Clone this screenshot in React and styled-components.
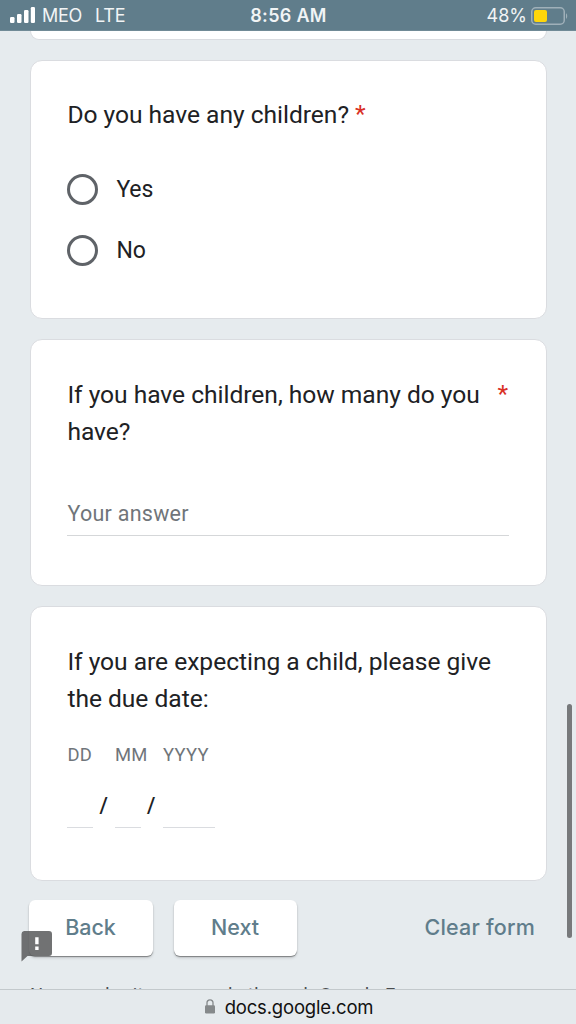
import React from 'react'
import styled, { createGlobalStyle } from 'styled-components'

const GlobalStyle = createGlobalStyle`
  * {
    box-sizing: border-box;
  }

  body {
    margin: 0;
    background-color: #e6ebee;
    font-family: Roboto, "Liberation Sans", sans-serif;
    color: #202124;
  }
`

const Screen = styled.div`
  position: relative;
  width: 576px;
  height: 1024px;
  display: flex;
  flex-direction: column;
  overflow: hidden;
  background-color: #e6ebee;
`

const StatusBar = styled.header`
  flex: none;
  height: 31px;
  padding: 1px 8px 0 10px;
  display: grid;
  grid-template-columns: 1fr auto 1fr;
  align-items: center;
  background-color: #607d8b;
  border-bottom: 1px solid #708a96;
  color: #f1f4f5;
  font-family: Inter, sans-serif;
  font-size: 18px;
`

const Carrier = styled.div`
  display: flex;
  align-items: center;
  gap: 7px;
  letter-spacing: -0.25px;
`

const Network = styled.span`
  margin-left: 6px;
`

const Clock = styled.div`
  padding-right: 1px;
  font-weight: 600;
  letter-spacing: 0.3px;
`

const Power = styled.div`
  display: flex;
  align-items: center;
  justify-content: flex-end;
  gap: 4px;
`

const Page = styled.main`
  flex: 1;
  min-height: 0;
  padding: 0 29px 0 30px;
  display: flex;
  flex-direction: column;
  overflow: hidden;
`

const Card = styled.section`
  flex: none;
  height: ${({ $height }) => $height}px;
  margin-bottom: 20px;
  padding: 36px 38px 0 36.4px;
  background-color: #fff;
  border: 1px solid #dadce0;
  border-radius: 12px;
`

const PreviousCard = styled(Card)`
  height: 9px;
  padding: 0;
  border-top: 0;
  border-radius: 0 0 12px 12px;
`

const ChoiceCard = styled(Card)`
  padding-top: 35px;
`

const Question = styled.div`
  display: flex;
  gap: ${({ $gap }) => $gap || 0}px;
  font-size: 24.6px;
  line-height: 37px;
  letter-spacing: -0.03px;
`

const Required = styled.span`
  color: #d93025;
  line-height: 35px;
`

const Options = styled.div`
  margin-top: 41px;
  display: flex;
  flex-direction: column;
  gap: 30.4px;
`

const Option = styled.label`
  height: 31px;
  display: flex;
  align-items: center;
  gap: 18px;
  font-size: 23px;
  letter-spacing: -0.1px;
`

const Radio = styled.span`
  width: 31px;
  height: 31px;
  border: 3px solid #5f6368;
  border-radius: 50%;
`

const Answer = styled.div`
  width: 442px;
  height: 41px;
  margin-top: 45px;
  border-bottom: 1px solid #d5d7d9;
  color: #70757a;
  font-size: 21.5px;
  line-height: 37px;
  letter-spacing: 0.27px;
`

const DateFields = styled.div`
  margin-top: 26px;
  display: flex;
`

const DateField = styled.div`
  width: ${({ $width }) => $width}px;
`

const DateLabel = styled.div`
  height: 24px;
  color: #70757a;
  font-size: 18.4px;
  line-height: 24px;
  letter-spacing: 0.35px;
  white-space: nowrap;
`

const DateBlank = styled.div`
  height: 36px;
  margin-top: 25px;
  border-bottom: 1px solid #dadce0;
`

const Slash = styled.span`
  width: ${({ $width }) => $width}px;
  padding: 49px 0 0 6px;
  font-size: 21.5px;
  font-weight: 500;
  line-height: 28px;
`

const Actions = styled.div`
  flex: none;
  height: 56px;
  margin: -1px 12px 0 -1px;
  display: flex;
  align-items: center;
  gap: 21px;
`

const Button = styled.button`
  width: ${({ $width }) => $width}px;
  height: 56px;
  padding: 0 1px 3px 0;
  border: 0;
  border-radius: 6px;
  background-color: #fff;
  box-shadow: 0 1px 1px rgba(0, 0, 0, 0.38), 0 2px 3px rgba(0, 0, 0, 0.14);
  color: #607d8b;
  font-family: Inter, sans-serif;
  font-size: 21.5px;
  font-weight: 500;
  letter-spacing: -0.05px;
`

const ClearButton = styled(Button)`
  width: auto;
  margin-left: auto;
  padding-right: 0;
  background: none;
  box-shadow: none;
  letter-spacing: 0.2px;
`

const Notice = styled.p`
  flex: none;
  margin: 25px 0 0;
  color: #4a4d50;
  font-size: 18.4px;
  line-height: 28px;
  letter-spacing: 0.45px;
  white-space: nowrap;
`

const AddressBar = styled.footer`
  position: relative;
  flex: none;
  height: 35px;
  padding-left: 2px;
  display: flex;
  align-items: center;
  justify-content: center;
  gap: 10px;
  border-top: 1px solid #c3c9cc;
  background-color: #e5eaed;
  color: #111;
  font-family: Inter, sans-serif;
  font-size: 18.5px;
  letter-spacing: -0.18px;
`

const Lock = styled.svg`
  margin-bottom: 2px;
`

const ReportBubble = styled.svg`
  position: absolute;
  left: 21px;
  top: 931px;
`

const ScrollThumb = styled.div`
  position: absolute;
  top: 704px;
  right: 4px;
  width: 5px;
  height: 234px;
  border-radius: 3px;
  background-color: #77797b;
`

function SignalIcon() {
  return (
    <svg width="25" height="17" fill="#fff">
      <rect x="0" y="10" width="4.5" height="6" rx="1.2" />
      <rect x="7" y="7" width="4.5" height="9" rx="1.2" />
      <rect x="14" y="3" width="4.5" height="13" rx="1.2" />
      <rect x="20.8" y="0" width="4.2" height="16" rx="1.2" />
    </svg>
  )
}

function BatteryIcon() {
  return (
    <svg width="37" height="18" viewBox="0 0 37 18">
      <rect x="0.75" y="0.75" width="32.5" height="16.5" rx="4" fill="none" stroke="#9fb0b9" strokeWidth="1.5" />
      <rect x="3" y="3" width="13" height="12" rx="2" fill="#ffd60a" />
      <path d="M35 6.2c1.6.8 1.6 4.8 0 5.6z" fill="#9fb0b9" />
    </svg>
  )
}

function LockIcon() {
  return (
    <Lock width="10" height="15" viewBox="0 0 10 15">
      <path d="M2 7V3.8a3 3 0 0 1 6 0V7" fill="none" stroke="#85898b" strokeWidth="1.3" />
      <rect x="0" y="6.3" width="10" height="8.2" rx="1.2" fill="#85898b" />
    </Lock>
  )
}

export default function App() {
  return (
    <>
      <GlobalStyle />
      <Screen>
        <StatusBar>
          <Carrier>
            <SignalIcon />
            <span>MEO</span>
            <Network>LTE</Network>
          </Carrier>
          <Clock>8:56 AM</Clock>
          <Power>
            48%
            <BatteryIcon />
          </Power>
        </StatusBar>

        <Page>
          <PreviousCard />

          <ChoiceCard $height={259}>
            <Question $gap={6}>
              <span>Do you have any children?</span>
              <Required>*</Required>
            </Question>
            <Options>
              {['Yes', 'No'].map(option => (
                <Option key={option}>
                  <Radio />
                  {option}
                </Option>
              ))}
            </Options>
          </ChoiceCard>

          <Card $height={247}>
            <Question $gap={12}>
              <span>If you have children, how many do you have?</span>
              <Required>*</Required>
            </Question>
            <Answer>Your answer</Answer>
          </Card>

          <Card $height={275}>
            <Question>If you are expecting a child, please give the due date:</Question>
            <DateFields>
              <DateField $width={26}>
                <DateLabel>DD</DateLabel>
                <DateBlank />
              </DateField>
              <Slash $width={21.5}>/</Slash>
              <DateField $width={26}>
                <DateLabel>MM</DateLabel>
                <DateBlank />
              </DateField>
              <Slash $width={22}>/</Slash>
              <DateField $width={52}>
                <DateLabel>YYYY</DateLabel>
                <DateBlank />
              </DateField>
            </DateFields>
          </Card>

          <Actions>
            <Button $width={124}>Back</Button>
            <Button $width={123}>Next</Button>
            <ClearButton>Clear form</ClearButton>
          </Actions>

          <Notice>Never submit passwords through Google Forms.</Notice>
        </Page>

        <AddressBar>
          <LockIcon />
          docs.google.com
        </AddressBar>

        <ReportBubble width="31" height="31" viewBox="0 0 31 31">
          <path
            d="M3 0h25a3 3 0 0 1 3 3v19a3 3 0 0 1-3 3H6.5L.5 30.5V3a3 3 0 0 1 2.5-3z"
            fill="#58595b"
            fillOpacity="0.85"
          />
          <path d="M14.2 6.2h3.4v7h-3.4zM14.2 15.6h3.4V19h-3.4z" fill="#fff" />
        </ReportBubble>
        <ScrollThumb />
      </Screen>
    </>
  )
}
